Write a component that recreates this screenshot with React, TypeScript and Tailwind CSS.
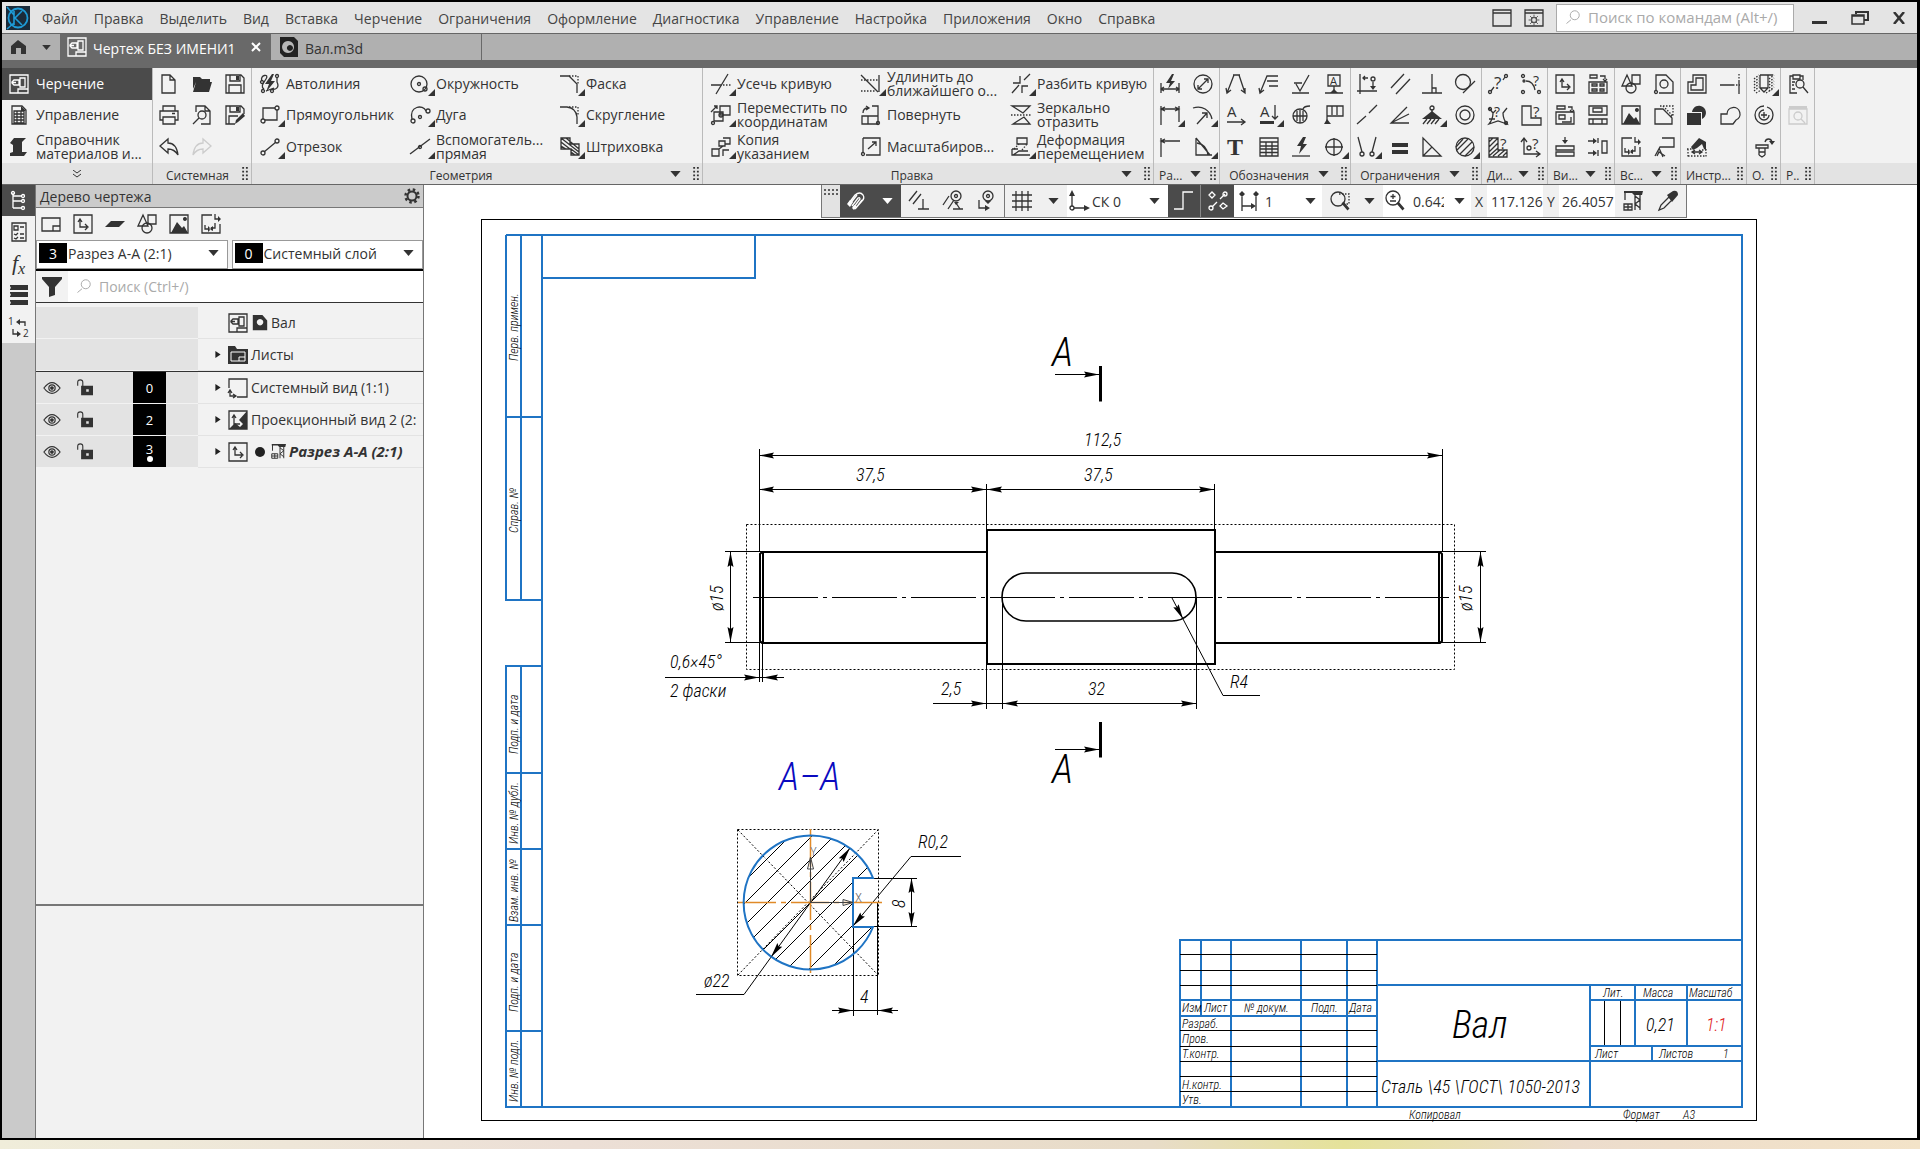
import { clsx } from "clsx";
import type { ReactNode } from "react";

type IconDef = {
  s?: string; // stroked outline
  f?: string; // filled shape
  d?: string; // dotted outline
  c?: number[][]; // circles: cx, cy, r
  t?: [string, number, number, number][]; // characters: text, x, y, size
};

// every icon is drawn in a 20x20 box
const ICONS: Record<string, IconDef> = {
  drawing: { s: "M1 1h18v18H1zM3 8l2-2h5v5H5L3 9zM3 8.500h4M11 4h5v9h-5zM9 19v-4h10" },
  sheetCalc: { s: "M3 1h10l4 4v14H3zM5 9h10M5 12h10M5 15h10M8 6v12M12 6v12M5 6h10v12H5z", f: "M12 1l5 5h-5z" },
  beam: { f: "M5 1h12l-4 4v10h5l-3 4H1v-3l3-1V8L1 6z" },
  newFile: { s: "M3 1h8l5 5v13H3zM11 1v5h5" },
  open: { f: "M1 3h7l2 2h8v3H4L1 15z M4 8h16l-3 10H1z" },
  save: { s: "M1 1h15l3 3v15H1zM5 1v6h10V1M4 19v-8h12v8", f: "M11 2h3v4h-3z" },
  print: { s: "M4 6V1h12v5M4 15H1V6h18v9h-3M4 12h12v7H4zM13 8.500h3" },
  preview: { s: "M4 7V1h9l5 5v13H9M13 1v5h5M7 13l-6 6", c: [[10, 10, 4]] },
  saveAs: { s: "M10 19H1V1h15l3 3v5M5 1v6h10V1M4 19v-8h9", f: "M11 2h3v4h-3zM10 19l1-4 7-7 2 3-7 6z" },
  undo: { s: "M1 9l8-7v4c6 0 9 4 10 12-3-5-6-6-10-6v4z" },
  redo: { s: "M19 9l-8-7v4C5 6 2 10 1 18c3-5 6-6 10-6v4z" },
  autoline: {
    s: "M2 7c-3-6 8-8 4-2S1 13 4 15M17 3v5c3 6-2 8-5 7M6 17l8-3",
    f: "M12 0L5 10h4l-3 8 9-11h-4l3-7z",
    c: [[2, 8, 1.5], [3, 17, 1.5], [17, 2, 1.5], [12, 17, 1.5]],
  },
  rect: { s: "M5 3h10M17 5v10H5M3 14V3h2", c: [[17, 3, 2], [3, 16, 2]] },
  segment: { s: "M4 15L16 5", c: [[3, 16, 2], [17, 4, 2]] },
  circle: { c: [[9, 10, 8], [9, 10, 1.5], [15, 15, 2]] },
  arc: { s: "M2 14C-1 1 13-1 16 6", c: [[3, 16, 2], [18, 6, 2], [10, 12, 1.5]] },
  auxLine: { s: "M0 17L20 2", c: [[10, 10, 1.5]] },
  chamfer: { s: "M0 2h9l8 8v9", d: "M9 2h9v8" },
  fillet: { s: "M0 2h7q9 1 10 10v7", d: "M9 2h9v8" },
  hatch: { s: "M1 1h9v6h9v11h-8v-6H1zM1 5l9 7M1 1l18 14M6 1l13 11M11 12l8 6M1 9l5 3M11 15l4 3" },
  trim: { s: "M0 11h9M5 20L17 0", d: "M9 11h11" },
  extend: { s: "M0 1l17 17M18 1v17", d: "M0 6h17M0 17h14" },
  split: { s: "M1 19l7-8M13 6l6-6M11 19v-7h6M2 9h7V2" },
  moveXY: { s: "M3 7h9v9H3zM9 1h10v9H9zM0 7l6-6M3 1h3v3", c: [[10, 10, 2], [2, 18, 1.5]] },
  rotate: { s: "M1 11h16v8H1zM11 1h6v18M7 11v8M2 8c0-4 2-5 5-5M5 1l3 2-3 2", c: [[17, 18, 1.5]] },
  mirror: { s: "M1 1h18L12 8zM2 19h17L13 12z", d: "M0 10h20" },
  copy: { s: "M8 4h6v5H8zM12 1h7v6h-5M1 12h7v7H1zM12 19v-6h6M8 12l4-3" },
  scale: { s: "M2 1h17v17H5M2 16V1M7 12l8-7M11 5h4v4", c: [[2, 17, 1.5]] },
  deform: { s: "M6 1h10v6H6zM1 12h6M1 12v6h18M2 18l6-4h9", d: "M3 12l5-5M11 13l5-6" },
  autoDim: { s: "M1 9v10M19 9v10M1 15h18M4 13l-3 2 3 2M16 13l3 2-3 2", f: "M12 0L6 9h4l-2 6 7-8h-4l3-7z" },
  linDim: { s: "M1 1v19M19 1v16M1 4h18M5 2L1 4l4 2M15 2l4 2-4 2" },
  ordDim: { s: "M1 1v19M1 4h19M5 2L1 4l4 2" },
  diaDim: { s: "M5 15L15 5M11 5h4v4M5 11v4h4", c: [[10, 10, 9]] },
  radDim: { s: "M0 3c9-3 17 2 19 11M4 19L14 8M14 13V8H9" },
  angDim: { s: "M3 1v17h16M3 1l14 17M4 6c7 1 10 5 11 12" },
  leader: { s: "M7 1h7M8 1L1 19M13 1l6 18M0 14l1 5 4-3M15 16l4 3v-5" },
  posLeader: { s: "M1 19L8 2h11M10 12h9M8 7h11M0 14l1 5 4-3" },
  rough: { s: "M1 19h17M3 9h8M5 10l4 7 9-16" },
  datum: { s: "M4 1h12v11H4zM10 12v6M1 19h18", f: "M6 19l4-4 4 4z", t: [["A", 6, 11, 11]] },
  textArrow: { s: "M1 17h18M15 14l4 3-4 3", t: [["A", 1, 12, 15]] },
  textDown: { s: "M16 0v14M13 11l3 3 3-3", f: "M1 16h14v3H1z", t: [["A", 1, 12, 15]] },
  weld: { s: "M9 5V18M6 6v10M12 6v10M12 4c1-3 4-3 7-3M2 11h14", c: [[9, 11, 7]] },
  flag: { s: "M3 19V1h16v10H3M8 1v9M13 1v9", f: "M0 19h7l-4-5z" },
  bigText: { t: [["T", 1, 18, 24]] },
  table: { s: "M1 1h18v18H1zM1 5h18M1 9h18M1 12h18M1 15.500h18M7 5v14M13 5v14" },
  flash: { s: "M1 19h18", f: "M12 0L6 9h4l-2 8 8-10h-4l3-7z" },
  center: { s: "M10 1v18M1 10h18", c: [[10, 10, 8]] },
  fixPoint: { s: "M3 0v20M0 17h20M6 4h5M8 2L6 4l2 2M16 8v6", f: "M13 12h6l-3 4z", c: [[16, 5, 2]] },
  parallel: { s: "M1 14L14 0M6 20L20 5" },
  perp: { s: "M0 19h20M10 0v19M10 14h4v5" },
  tangent: { s: "M8 19L20 7", c: [[8, 8, 7.5]] },
  collinear: { s: "M0 19l9-8M12 8l8-8" },
  angleCon: { s: "M19 18H1L17 2M1 18l18-9" },
  anchor: { s: "M1 19l4-5M5 19l4-5M9 19l4-5M13 19l4-5M10 4v6", f: "M10 6l10 8H0z", c: [[10, 3, 2]] },
  concentric: { c: [[10, 10, 9], [10, 10, 5]] },
  merge: { s: "M1 0l4 15M19 0l-4 15", c: [[5, 17, 2], [15, 17, 2]] },
  equal: { f: "M2 6h16v4H2zM2 13h16v4H2z" },
  triangle: { s: "M1 1v18h18zM1 19L10 10" },
  hatchCon: { s: "M2 13L13 2M5 17L17 5M1 10l7-8M10 19l9-9", c: [[10, 10, 9]] },
  infoPt: { s: "M3 17l3-4M15 6l2-3", c: [[2, 18, 1.5], [18, 2, 1.5]], t: [["?", 6, 15, 17]] },
  infoArc: { s: "M5 7c5 0 8 4 9 9", c: [[2, 2, 1.5], [2, 18, 1.5], [18, 18, 1.5], [3, 7, 1]], t: [["?", 12, 12, 14]] },
  infoCurve: { s: "M1 3l4 5q0 6-4 11l9-3 9 3q-4-5-4-11l4-5M1 14h6M5 8l3-3", c: [[2, 4, 1.5], [18, 18, 1.5]], t: [["?", 6, 12, 14]] },
  infoL: { s: "M1 1h9v12h10v7H1z", t: [["?", 12, 12, 15]] },
  infoHatch: { s: "M1 1h9v12h9v7H1zM1 5l4-4M1 10l9-9M1 15l9-9M1 19l9-8M5 19l7-6M10 19l7-6M15 19l4-4", t: [["?", 12, 12, 15]] },
  infoAxis: { s: "M3 2v15h15M0 5l3-4 3 4M15 14l4 3-4 3", c: [[8, 11, 2]], t: [["?", 11, 12, 15]] },
  view: { s: "M1 1h18v18H1zM7 6v7h7M5 8l2-3 2 3M12 10l3 3-3 3" },
  viewStd: { s: "M1 8h18v11H1zM2 1h7v3H2zM12 2h5v3M15 5l2 2 2-2M4 10h5v2H4zM12 10h4v2h-4zM4 15h5v2H4zM12 15h4v2h-4z" },
  viewProj: { s: "M1 7h18v12H1zM2 1h8v3H2zM13 2h4v3M15 5l2 2 2-2M4 10h6v4H4zM7 17h9v-5" },
  viewSplit: { s: "M1 1h18v9H1zM5 3h9v4H5zM1 14h18v5H1zM5 14v5M14 14v5" },
  layers: { s: "M1 9h18v4H1zM1 15h18v4H1zM10 0v4", f: "M7 3h6l-3 4z" },
  alignV: { s: "M14 4h5v12h-5zM10 1v5M10 13v6M0 4h5M0 16h5", f: "M5 1l4 3-4 3zM5 13l4 3-4 3z" },
  shapes: { s: "M1 12L6 1l5 11zM11 1h8v9h-8z", c: [[10, 14, 5]] },
  detail: { s: "M2 16V1h10l7 7v11H5", c: [[10, 10, 4], [2, 18, 1.5]] },
  image: { s: "M1 1h18v18H1z", f: "M2 19l6-11 5 6 2-2 4 7zM16 3a2 2 0 1 1-.1 0z" },
  fragment: { s: "M1 4h8l9 9v6H1z", d: "M6 1h13v10h-4M9 1l10 10" },
  insertView: { s: "M11 1H1v18h18v-9M14 0v5h5M4 11v4h4M14 9v5h-4", f: "M17 2l3 3-3 3zM7 12l3 3-3 3zM12 12l-4 3 4 2z" },
  leaderBox: { s: "M8 1h12v9H6L1 19M5 11l4 9M3 19h0l2-4 6 4" },
  contour: { s: "M6 1h13v18H1V8h5zM9 4h7v12H4v-5h5z" },
  extLine: { s: "M0 11h13M19 6v14", d: "M19 0v6M13 11h7" },
  union: { f: "M0 8h14v12H0zM5 7a7 7 0 1 1 10 7V7z" },
  blob: { s: "M1 9h6a6.500 6.500 0 1 1 9 6l-3 4H1z" },
  ruler: { f: "M4 10l8-9 7 4v8l-2-1-2-5-5 4-4 2z", s: "M6 15h8M8 13l-3 2 3 2M12 13l3 2-3 2", d: "M1 12v8M19 12v8M0 12h5M1 19h18M15 13h4" },
  hole: {
    s: "M6 1v13l4 4 4-4V1M6 14h8M10 1h9M6 1h8",
    d: "M0 5l5-4M0 8l5-4M0 11l5-4M0 14l5-4M0 17l5-4M2 19l5-3M15 5l5-4M15 8l5-4M15 11l5-4M15 14l5-4M15 17l5-4M12 19l7-4",
  },
  thread: { s: "M10 7v6M7 10h6M10 1a9 9 0 1 0 9 9q0-6-6-8M10 5a5 5 0 1 0 5 5" },
  bolt: { s: "M2 8h12v3H2zM5 11v7M11 11v7M5 15h6M5 18l3 2 3-2M11 5c1-4 6-4 7 0", f: "M15 4h6l-3 4z" },
  report: { s: "M9 19H2V2h3M12 2h3v4M5 1h7v4H5zM4 8h3M4 11h2M4 15h3M15 13l5 6", c: [[12, 10, 4]] },
  reportOff: { s: "M1 4h18v15H1zM13 14l4 4", f: "M1 1h18v3H1z", c: [[10, 11, 4]] },
  // side strip and tree
  tree: { s: "M4 2v15M4 10h9M4 17h9M4 5h9", c: [[4, 2, 1.5], [14, 5, 1.5], [14, 10, 1.5], [14, 17, 1.5]] },
  checklist: { s: "M3 1h14v18H3zM5 4h4v4H5zM11 5h4M5 12l2 1 2-2M11 12h4M5 16l2 1 2-2M11 16h4" },
  stack: { f: "M1 0h18v5H1V4l1-1-1-2zM1 7h18v5H1v-1l1-1-1-2zM1 15h18v5H1v-1l1-1-1-2z" },
  swap: { s: "M10 5h6v4M4 12v5h5", f: "M11 2L7 5l4 3zM8 14l4 3-4 3z", t: [["1", -1, 8, 10], ["2", 14, 20, 10]] },
  sheet: { s: "M1 4h18v13H1zM12 17v-5h7" },
  plane: { f: "M6 7h14l-6 6H0z" },
  funnel: { f: "M0 0h20v2l-7 8v8l-6 2V10L0 2z" },
  sysView: { s: "M1 10V1h18v18H9M2 13v5h5M0 15l2-3 2 3M5 16l3 2-3 2" },
  projView: { s: "M1 1h18v18H1zM6 5v9h6M4 8l2-3 2 3", f: "M19 1v18H1l6-6 5 4 3-3-4-4z" },
  eye: { s: "M1 10q9-12 18 0-9 12-18 0z", c: [[10, 10, 3.5]], f: "M10 8a2 2 0 1 1-.1 0z" },
  lock: { f: "M6 8h14v11H6zM12 12v3h3v-3z", s: "M2 8V4q0-3 3-3t3 3v5" },
  crane: { s: "M2 1v8M12 4v15M17 4v15M12 5l5 4-5 4 5 4M1 13h8v6H1zM5 13v6M1 16h8", f: "M1 0h19l-1 4h-8l-2-2H1z" },
  part: { f: "M1 0h12l6 7v12H1zM10 5a4 4 0 1 0 .1 0z" },
  gear: { s: "M10 1v3M10 16v3M1 10h3M16 10h3M3.500 3.500l3 3M13.500 13.500l3 3M16.500 3.500l-3 3M6.500 13.500l-3 3", c: [[10, 10, 5], [10, 10, 4]] },
  search: { s: "M8 13l-6 5", c: [[13, 7, 6]] },
  window: { s: "M1 2h18v16H1zM1 5h18" },
  // floating toolbar
  magnet: { s: "M3 12L9 4q5-4 8 0 2 3-1 6l-7 8M6 15l6-8q2-1 2 1l-6 8M4 13l7-9M10 17l6-8", f: "M1 13l3-4 3 2-3 5zM6 17l2-3 3 1-3 4z" },
  snapPerp: { s: "M0 10L8 0M4 13l8-10M9 18h11M14 8v10" },
  snapPar: { s: "M0 14l6-9M5 18l6-9M10 18h10M13 12l4 6", f: "M11 11h5l-3 3z", c: [[13, 5, 5], [13, 5, 1.5]] },
  snapAxis: { s: "M3 9v8h7", f: "M9 14l5 3-5 3zM9 10h6l-3 3z", c: [[12, 5, 5], [12, 5, 1.5]] },
  grid: { s: "M4 0v20M10 0v20M16 0v20M0 4h20M0 10h20M0 16h20" },
  axes: { s: "M3 3v12M5 17h12", f: "M0 5l3-6 3 6zM15 14l6 3-6 3z", c: [[3, 17, 2]] },
  ortho: { s: "M0 18h9V1h10" },
  snapNodes: { s: "M4 16l5-5M12 8l5-5M4 1l3 3-3 3-3-3zM15 12l4 3-4 3-3-3z", c: [[3, 17, 2], [17, 3, 2]] },
  step: { s: "M3 6v14M17 6v14M3 15h12", f: "M12 12l5 3-5 3zM3 0l3 3-3 3-3-3zM17 0l3 3-3 3-3-3z" },
  zoomArea: { s: "M12 12l6 7M13 11l6 7", c: [[8, 8, 7]], d: "M9 3h10v10h-7" },
  zoomIn: { s: "M12 12l6 7M13 11l6 7M8 3v5M5.500 5.500h5M5 10h6", c: [[8, 7, 7]] },
  dropper: { s: "M1 19l2-5 8-8 3 3-8 8z", f: "M9 4l6-4q5-1 5 4l-6 7z" },
};

function Icon({ name, more, className }: { name: string; more?: boolean; className?: string }) {
  const icon = ICONS[name];
  return (
    <svg
      viewBox="0 0 20 20"
      className={clsx("shrink-0 overflow-visible", className ?? "size-5")}
      fill="none"
      stroke="currentColor"
      strokeWidth="1.3"
      aria-hidden="true"
    >
      {icon.f && <path d={icon.f} fill="currentColor" fillRule="evenodd" stroke="none" />}
      {icon.s && <path d={icon.s} />}
      {icon.d && <path d={icon.d} strokeDasharray="1.5 1.5" />}
      {icon.c?.map(([cx, cy, r]) => (
        <circle key={`${cx}-${cy}-${r}`} cx={cx} cy={cy} r={r} />
      ))}
      {icon.t?.map(([char, x, y, size]) => (
        <text
          key={char}
          x={x}
          y={y}
          fontSize={size}
          fill="currentColor"
          stroke="none"
          fontFamily={char === "T" ? "Liberation Serif, serif" : "Open Sans, sans-serif"}
          fontWeight={char === "T" ? 700 : 500}
        >
          {char}
        </text>
      ))}
      {more && <path d="M25 15v7h-7z" fill="currentColor" stroke="none" />}
    </svg>
  );
}

function Caret({ className }: { className?: string }) {
  return (
    <svg viewBox="0 0 12 7" className={clsx("shrink-0", className ?? "h-[6px] w-[11px]")} aria-hidden="true">
      <path d="M0 0h12L6 7z" fill="currentColor" />
    </svg>
  );
}

function Grip() {
  return (
    <svg viewBox="0 0 6 14" className="h-[13px] w-[6px] shrink-0" aria-hidden="true">
      <path d="M0 1h2m2 0h2M0 5h2m2 0h2M0 9h2m2 0h2M0 13h2m2 0h2" stroke="#333" strokeWidth="2" />
    </svg>
  );
}

const MENU = [
  "Файл",
  "Правка",
  "Выделить",
  "Вид",
  "Вставка",
  "Черчение",
  "Ограничения",
  "Оформление",
  "Диагностика",
  "Управление",
  "Настройка",
  "Приложения",
  "Окно",
  "Справка",
];

// [icon, label, has sub-menu], listed row by row
type Tool = [string, string, boolean?];

const GEOMETRY: Tool[] = [
  ["autoline", "Автолиния"],
  ["circle", "Окружность", true],
  ["chamfer", "Фаска", true],
  ["rect", "Прямоугольник", true],
  ["arc", "Дуга", true],
  ["fillet", "Скругление", true],
  ["segment", "Отрезок", true],
  ["auxLine", "Вспомогатель...\nпрямая", true],
  ["hatch", "Штриховка", true],
];

const EDITING: Tool[] = [
  ["trim", "Усечь кривую", true],
  ["extend", "Удлинить до\nближайшего о...", true],
  ["split", "Разбить кривую", true],
  ["moveXY", "Переместить по\nкоординатам", true],
  ["rotate", "Повернуть"],
  ["mirror", "Зеркально\nотразить"],
  ["copy", "Копия\nуказанием", true],
  ["scale", "Масштабиров..."],
  ["deform", "Деформация\nперемещением", true],
];

// a trailing "+" marks a tool with a sub-menu, an empty string leaves the cell blank
const ICON_GROUPS = [
  {
    title: "Ра...",
    menu: true,
    className: "w-[66px]",
    grid: "grid-cols-2",
    icons: ["autoDim", "diaDim", "linDim+", "radDim+", "ordDim", "angDim+"],
  },
  {
    title: "Обозначения",
    menu: true,
    className: "w-[131px]",
    grid: "grid-cols-4",
    icons: [
      "leader", "posLeader", "rough", "datum",
      "textArrow", "textDown+", "weld", "flag",
      "bigText", "table", "flash", "center+",
    ],
  },
  {
    title: "Ограничения",
    menu: true,
    className: "w-[131px]",
    grid: "grid-cols-4",
    icons: [
      "fixPoint", "parallel", "perp", "tangent",
      "collinear", "angleCon", "anchor+", "concentric",
      "merge+", "equal", "triangle", "hatchCon+",
    ],
  },
  {
    title: "Ди...",
    menu: true,
    className: "w-[66px]",
    grid: "grid-cols-2",
    icons: ["infoPt", "infoArc", "infoCurve", "infoL", "infoHatch", "infoAxis"],
  },
  {
    title: "Ви...",
    menu: true,
    className: "w-[67px]",
    grid: "grid-cols-2",
    icons: ["view", "viewStd", "viewProj", "viewSplit", "layers", "alignV"],
  },
  {
    title: "Вс...",
    menu: true,
    className: "w-[66px]",
    grid: "grid-cols-2",
    icons: ["shapes", "detail", "image", "fragment", "insertView", "leaderBox"],
  },
  {
    title: "Инстр...",
    menu: false,
    className: "w-[66px]",
    grid: "grid-cols-2",
    icons: ["contour", "extLine", "union", "blob", "ruler", ""],
  },
  {
    title: "О.",
    menu: false,
    className: "w-[34px]",
    grid: "grid-cols-1",
    icons: ["hole+", "thread", "bolt"],
  },
  {
    title: "Р..",
    menu: false,
    className: "w-[34px]",
    grid: "grid-cols-1",
    icons: ["report", "reportOff", ""],
  },
];

function MenuBar() {
  return (
    <header className="flex h-8 items-center border-b border-[#666] bg-[#e4e4e4] pl-1">
      <svg viewBox="0 0 24 24" className="size-6" aria-label="КОМПАС">
        <rect width="24" height="24" fill="#1b2b3a" />
        <circle cx="12" cy="12" r="9.500" fill="none" stroke="#1e9bd7" strokeWidth="1.800" />
        <path d="M8 5v14M16 5l-7 7 7 7M1 1l7 8M1 23l7-6" fill="none" stroke="#1e9bd7" strokeWidth="1.600" />
      </svg>
      <nav className="ml-1 flex text-[14px] text-[#444]">
        {MENU.map((item) => (
          <button key={item} className="px-2 pt-[2px] whitespace-nowrap">
            {item}
          </button>
        ))}
      </nav>
      <div className="ml-auto flex items-center text-[#333]">
        <button aria-label="Область окна" className="mr-3 flex">
          <Icon name="window" />
        </button>
        <button aria-label="Настройка интерфейса" className="mr-3 grid">
          <Icon name="window" className="col-start-1 row-start-1 size-5" />
          <Icon name="gear" className="col-start-1 row-start-1 m-auto mt-[6px] size-3" />
        </button>
        <label className="mr-[18px] flex h-7 w-[238px] items-center gap-2 border border-[#aaa] bg-white px-2 text-[#aaa]">
          <Icon name="search" className="size-[15px]" />
          <input
            type="text"
            aria-label="Поиск по командам"
            placeholder="Поиск по командам (Alt+/)"
            className="w-full min-w-0 text-[15px] outline-none placeholder:text-[#aaa]"
          />
        </label>
        <button aria-label="Свернуть" className="mr-6 flex h-3 w-[15px] items-end">
          <span className="h-[3px] w-full bg-[#333]" />
        </button>
        <button aria-label="Восстановить" className="mr-6 flex">
          <svg viewBox="0 0 18 14" className="h-[14px] w-[18px]" fill="none" stroke="#333">
            <path d="M5 3V1h12v8h-4" strokeWidth="2" />
            <path d="M1 4h12v9H1zM1 5h12" strokeWidth="1.500" />
          </svg>
        </button>
        <button aria-label="Закрыть" className="mr-3 flex">
          <svg viewBox="0 0 12 12" className="size-3" stroke="#333" strokeWidth="2.500">
            <path d="M1 0l10 12M11 0L1 12" />
          </svg>
        </button>
      </div>
    </header>
  );
}

function TabBar() {
  return (
    <div className="flex h-[34px] items-stretch border-b-8 border-[#696969] bg-[#b0b0b0] text-[14px] text-[#333]">
      <button aria-label="Стартовая страница" className="flex w-[58px] items-center gap-4 pl-2">
        <svg viewBox="0 0 16 14" className="h-[14px] w-4" aria-hidden="true">
          <path d="M8 0l8 6v8h-5V8H6v6H1V6z" fill="#333" />
        </svg>
        <Caret className="h-[5px] w-[9px]" />
      </button>
      <div className="flex w-[211px] items-center bg-[#696969] pl-[7px] text-white">
        <Icon name="drawing" />
        <button className="pt-[3px] pl-[6px] whitespace-nowrap">Чертеж БЕЗ ИМЕНИ1</button>
        <button aria-label="Закрыть вкладку" className="mr-[10px] ml-auto">
          <svg viewBox="0 0 10 10" className="size-[10px]" stroke="currentColor" strokeWidth="2">
            <path d="M1 1l8 8M9 1L1 9" />
          </svg>
        </button>
      </div>
      <button className="flex w-[211px] items-center gap-[6px] border-r border-[#696969] pl-2">
        <svg viewBox="0 0 20 20" className="size-5" aria-hidden="true">
          <path d="M1 0h14l4 4v16H5l-4-4z" fill="#222" />
          <path d="M9 4a6 6 0 1 0 .1 0zM11 8a3 3 0 1 1-.1 0z" fill="#b8b8b8" fillRule="evenodd" />
        </svg>
        <span className="pt-[3px]">Вал.m3d</span>
      </button>
    </div>
  );
}

function GroupFooter({ title, menu, wide }: { title: string; menu?: boolean; wide?: boolean }) {
  return (
    <div className="flex h-[21px] items-center bg-[#e3e3e3] pr-[3px] text-[12px] text-[#333]">
      <span className={clsx("flex-1 pt-1 whitespace-nowrap", wide ? "text-center" : "pl-[5px]")}>{title}</span>
      {menu && <Caret className={clsx("h-[6px] w-[11px]", wide ? "mr-3" : "mr-[9px]")} />}
      <Grip />
    </div>
  );
}

function LabelledGroup({ title, tools }: { title: string; tools: Tool[] }) {
  return (
    <section className="flex w-[451px] shrink-0 flex-col border-r border-[#bbb]">
      <div className="grid flex-1 grid-cols-3 grid-rows-3">
        {tools.map(([icon, label, more]) => (
          <button key={label} className="flex min-w-0 items-center gap-[6px] pl-2 text-left">
            <Icon name={icon} more={more} />
            <span className="text-[14px] leading-[14px] whitespace-pre">{label}</span>
          </button>
        ))}
      </div>
      <GroupFooter title={title} menu wide />
    </section>
  );
}

function IconCell({ spec, disabled }: { spec: string; disabled?: boolean }) {
  const name = spec.replace("+", "");
  if (!name) return <span />;
  return (
    <button
      aria-label={name}
      disabled={disabled}
      className={clsx("flex items-center justify-center", disabled && "text-[#ccc]")}
    >
      <Icon name={name} more={spec.endsWith("+")} />
    </button>
  );
}

function Ribbon() {
  return (
    <div className="flex h-[117px] overflow-hidden border-b border-[#666] bg-[#f2f2f2] text-[#333]">
      <section className="flex w-[151px] shrink-0 flex-col border-r border-[#bbb] text-[14px] leading-[14px]">
        <div className="grid flex-1 grid-rows-3">
          <button className="flex items-center gap-[7px] bg-[#4b4b4b] pl-[7px] text-left text-white">
            <Icon name="drawing" />
            Черчение
          </button>
          <button className="flex items-center gap-[7px] pl-[7px] text-left">
            <Icon name="sheetCalc" />
            Управление
          </button>
          <button className="flex items-center gap-[7px] pl-[7px] text-left">
            <Icon name="beam" />
            <span className="whitespace-pre">{"Справочник\nматериалов и..."}</span>
          </button>
        </div>
        <button aria-label="Ещё" className="flex h-[21px] items-center justify-center bg-[#e3e3e3]">
          <svg viewBox="0 0 8 8" className="size-2" fill="none" stroke="#333">
            <path d="M0 0l4 3 4-3M0 4l4 3 4-3" />
          </svg>
        </button>
      </section>

      <section className="flex w-[99px] shrink-0 flex-col border-r border-[#bbb]">
        <div className="grid flex-1 grid-cols-3 grid-rows-3">
          {["newFile", "open", "save", "print", "preview", "saveAs", "undo", "redo"].map((name) => (
            <IconCell key={name} spec={name} disabled={name === "redo"} />
          ))}
        </div>
        <GroupFooter title="Системная" wide />
      </section>

      <LabelledGroup title="Геометрия" tools={GEOMETRY} />
      <LabelledGroup title="Правка" tools={EDITING} />

      {ICON_GROUPS.map((group) => (
        <section key={group.title} className={clsx("flex shrink-0 flex-col border-r border-[#bbb]", group.className)}>
          <div className={clsx("grid flex-1 grid-rows-3", group.grid)}>
            {group.icons.map((spec, index) => (
              <IconCell key={index} spec={spec} disabled={spec === "reportOff"} />
            ))}
          </div>
          <GroupFooter title={group.title} menu={group.menu} wide={group.icons.length > 6} />
        </section>
      ))}
      <div className="flex flex-1 flex-col justify-end">
        <div className="h-[21px] bg-[#e3e3e3]" />
      </div>
    </div>
  );
}

function SideStrip() {
  return (
    <div className="w-[33px] shrink-0 bg-[#cacaca] text-[#333]">
      <button aria-label="Дерево" className="flex h-[31px] w-full items-center justify-center bg-[#4b4b4b] text-white">
        <Icon name="tree" />
      </button>
      <button aria-label="Параметры" className="flex h-[31px] w-full items-center justify-center bg-[#f2f2f2]">
        <Icon name="checklist" />
      </button>
      <button className="h-8 w-full bg-[#f2f2f2] font-[Liberation_Serif,serif] text-[22px] leading-6 italic">
        f<sub className="text-[16px]">x</sub>
      </button>
      <button aria-label="Слои" className="flex h-8 w-full items-center justify-center bg-[#f2f2f2]">
        <Icon name="stack" />
      </button>
      <button aria-label="Замена" className="flex h-8 w-full items-center justify-center bg-[#f2f2f2]">
        <Icon name="swap" />
      </button>
    </div>
  );
}

function LayerSelect({ badge, value, label }: { badge: string; value: string; label: string }) {
  return (
    <label className="flex h-[29px] min-w-0 flex-1 items-center border border-[#999] bg-white pr-2 pb-[3px] pl-[2px]">
      <span className="flex h-5 w-7 shrink-0 items-center justify-center bg-black text-white">{badge}</span>
      <select aria-label={label} className="min-w-0 flex-1 appearance-none pl-[1px] whitespace-nowrap outline-none">
        <option>{value}</option>
      </select>
      <Caret />
    </label>
  );
}

type RowProps = { layer?: string; current?: boolean; expandable?: boolean; children: ReactNode };

function TreeRow({ layer, current, expandable, children }: RowProps) {
  return (
    <li className="flex h-8">
      <div className="flex w-[162px] shrink-0 items-stretch border-b border-[#f2f2f2] bg-[#e3e3e3]">
        {layer && (
          <>
            <button aria-label="Видимость" className="ml-[7px] flex items-center">
              <Icon name="eye" className="size-[18px]" />
            </button>
            <button aria-label="Блокировка" className="ml-[15px] flex items-center">
              <Icon name="lock" className="size-[17px]" />
            </button>
            <span className="ml-10 flex w-[33px] flex-col items-center justify-center bg-black text-[13px] leading-[14px] text-white">
              {layer}
              {current && <span className="size-[6px] rounded-full bg-white" />}
            </span>
          </>
        )}
      </div>
      <div className="flex min-w-0 flex-1 items-center gap-[3px] overflow-hidden border-b border-[#e3e3e3] pl-[17px] whitespace-nowrap">
        <span className="w-[10px] shrink-0">
          {expandable && (
            <svg viewBox="0 0 6 8" className="h-[7px] w-[6px]" aria-hidden="true">
              <path d="M0 0l6 4-6 4z" fill="#222" />
            </svg>
          )}
        </span>
        {children}
      </div>
    </li>
  );
}

function TreePanel() {
  return (
    <aside className="flex w-[389px] shrink-0 flex-col border-x border-[#777] bg-[#f2f2f2] text-[15px] text-[#333]">
      <div className="flex h-[23px] items-center justify-between border-b border-[#777] bg-[#cbcbcb] pr-[3px] pl-1 text-[14px]">
        Дерево чертежа
        <button aria-label="Настройка дерева" className="flex">
          <svg viewBox="0 0 16 16" className="size-4" fill="none" stroke="#333">
            <circle cx="8" cy="8" r="4.500" strokeWidth="2" />
            <circle cx="8" cy="8" r="6.500" strokeWidth="2.500" strokeDasharray="2.500 2.600" />
          </svg>
        </button>
      </div>
      <div className="flex h-8 items-center gap-3 pl-[5px]">
        {["sheet", "view", "plane", "shapes", "image", "insertView"].map((name) => (
          <button key={name} aria-label={name} className="flex">
            <Icon name={name} />
          </button>
        ))}
      </div>
      <div className="flex gap-1 border-b-2 border-black text-[14px]">
        <LayerSelect badge="3" value="Разрез А-А (2:1)" label="Текущий вид" />
        <LayerSelect badge="0" value="Системный слой" label="Текущий слой" />
      </div>
      <div className="flex h-8 items-stretch border-b border-[#333]">
        <button aria-label="Фильтр" className="flex w-8 items-center justify-center">
          <Icon name="funnel" />
        </button>
        <label className="flex flex-1 items-center gap-2 bg-white pl-2 text-[#aaa]">
          <Icon name="search" className="size-[15px]" />
          <input
            type="text"
            aria-label="Поиск"
            placeholder="Поиск (Ctrl+/)"
            className="w-full text-[14px] outline-none placeholder:text-[#aaa]"
          />
        </label>
      </div>
      <ul className="pt-1 text-[14px]">
        <TreeRow>
          <Icon name="drawing" />
          <Icon name="part" className="ml-[1px] size-4" />
          Вал
        </TreeRow>
        <TreeRow expandable>
          <svg viewBox="0 0 20 20" className="size-5 shrink-0" aria-hidden="true">
            <path d="M0 1h7l2 3h11v15H0z" fill="#333" />
            <path d="M3 7h14v9H3zM11 16v-4h6" fill="none" stroke="#fff" />
          </svg>
          Листы
        </TreeRow>
        <li className="h-px bg-[#333]" />
        <TreeRow layer="0" expandable>
          <Icon name="sysView" />
          Системный вид (1:1)
        </TreeRow>
        <TreeRow layer="2" expandable>
          <Icon name="projView" />
          Проекционный вид 2 (2:
        </TreeRow>
        <TreeRow layer="3" current expandable>
          <Icon name="view" />
          <span className="mr-[3px] ml-1 size-[10px] shrink-0 rounded-full bg-[#222]" />
          <Icon name="crane" className="size-[15px]" />
          <span className="text-[15px] font-bold italic">Разрез А-А (2:1)</span>
        </TreeRow>
      </ul>
      <div className="flex-1" />
      <div className="h-[234px] border-t-2 border-[#777]" />
    </aside>
  );
}

function CanvasToolbar() {
  return (
    <div className="mr-[230px] flex h-[33px] shrink-0 items-stretch self-end border border-t-0 border-[#777] bg-[#f0f0f0] text-[14px] text-[#333]">
      <span className="flex w-[18px] justify-center bg-[#e3e3e3] pt-1">
        <svg viewBox="0 0 14 6" className="h-[6px] w-[14px]" aria-hidden="true">
          <path d="M0 1h14M0 5h14" stroke="#333" strokeWidth="1.500" strokeDasharray="2 2" />
        </svg>
      </span>
      <button aria-label="Привязки" className="flex w-[61px] items-center gap-4 bg-[#4b4b4b] pl-[6px] text-white">
        <Icon name="magnet" />
        <Caret />
      </button>
      <div className="flex w-[104px] items-center justify-between border-r border-[#777] px-2">
        {["snapPerp", "snapPar", "snapAxis"].map((name) => (
          <button key={name} aria-label={name} className="flex">
            <Icon name={name} />
          </button>
        ))}
      </div>
      <button aria-label="Сетка" className="flex w-[62px] items-center justify-between pr-2 pl-[7px]">
        <Icon name="grid" />
        <Caret />
      </button>
      <label className="flex w-[101px] items-center gap-[3px] bg-white pr-2 pl-[2px]">
        <Icon name="axes" />
        <select aria-label="Система координат" className="min-w-0 flex-1 appearance-none outline-none">
          <option>СК 0</option>
        </select>
        <Caret />
      </label>
      <button aria-label="Ортогональное черчение" className="flex w-[33px] items-center justify-center border-r border-[#888] bg-[#4b4b4b] text-white">
        <Icon name="ortho" />
      </button>
      <button aria-label="Параметрический режим" className="flex w-[33px] items-center justify-center bg-[#4b4b4b] text-white">
        <Icon name="snapNodes" />
      </button>
      <label className="flex w-[88px] items-center gap-[6px] bg-white pr-[6px] pl-[5px]">
        <Icon name="step" />
        <select aria-label="Шаг курсора" className="min-w-0 flex-1 appearance-none outline-none">
          <option>1</option>
        </select>
        <Caret />
      </label>
      <button aria-label="Масштаб по рамке" className="flex w-[61px] items-center justify-between pr-2 pl-2">
        <Icon name="zoomArea" />
        <Caret />
      </button>
      <label className="flex w-[88px] items-center gap-2 bg-white pr-[6px] pl-[2px]">
        <Icon name="zoomIn" />
        <input aria-label="Масштаб" defaultValue="0.6424" className="w-[31px] outline-none" />
        <Caret className="ml-auto h-[6px] w-[11px]" />
      </label>
      <label className="flex w-[72px] items-center">
        <span className="w-4 text-center">X</span>
        <input defaultValue="117.126" className="h-full w-14 bg-white pl-1 outline-none" />
      </label>
      <label className="flex w-[72px] items-center">
        <span className="w-4 text-center">Y</span>
        <input defaultValue="26.4057" className="h-full w-14 bg-white pl-[3px] outline-none" />
      </label>
      <div className="flex w-[71px] items-center justify-around">
        <button aria-label="Режим построения" className="flex">
          <Icon name="crane" />
        </button>
        <button aria-label="Копировать свойства" className="flex">
          <Icon name="dropper" />
        </button>
      </div>
    </div>
  );
}

// arrow head with its tip at x,y; angle 0 points right
function Arrow({ x, y, angle = 0 }: { x: number; y: number; angle?: number }) {
  return <path d="M0 0L-15 -3L-13 0L-15 3z" transform={`translate(${x} ${y}) rotate(${angle})`} />;
}

const BLUE = "#1f74c4";
const HATCH_SUMS = [1626, 1648, 1670, 1691, 1713, 1735, 1756, 1778, 1799];

type Label = [string, number, number];

const STAMP_TEXT: Label[] = [
  ["Изм", 1182, 1012],
  ["Лист", 1204, 1012],
  ["№ докум.", 1244, 1012],
  ["Подп.", 1311, 1012],
  ["Дата", 1349, 1012],
  ["Разраб.", 1182, 1028],
  ["Пров.", 1182, 1043],
  ["Т.контр.", 1182, 1058],
  ["Н.контр.", 1182, 1089],
  ["Утв.", 1182, 1104],
  ["Лит.", 1603, 997],
  ["Масса", 1643, 997],
  ["Масштаб", 1689, 997],
  ["Лист", 1595, 1058],
  ["Листов", 1659, 1058],
  ["1", 1723, 1058],
  ["Копировал", 1409, 1119],
  ["Формат", 1623, 1119],
  ["А3", 1683, 1119],
];

const SIDE_TEXT: Label[] = [
  ["Перв. примен.", 518, 361],
  ["Справ. №", 518, 533],
  ["Подп. и дата", 518, 754],
  ["Инв. № дубл.", 518, 844],
  ["Взам. инв. №", 518, 922],
  ["Подп. и дата", 518, 1012],
  ["Инв. № подл.", 518, 1102],
];

const DIM_TEXT: Label[] = [
  ["112,5", 1084, 446],
  ["37,5", 856, 481],
  ["37,5", 1084, 481],
  ["0,6×45°", 670, 668],
  ["2 фаски", 670, 697],
  ["2,5", 941, 695],
  ["32", 1088, 695],
  ["R4", 1230, 688],
  ["R0,2", 918, 848],
  ["ø22", 704, 987],
  ["4", 860, 1003],
];

function SheetFrame() {
  return (
    <g>
      <rect x="481.500" y="219.500" width="1275" height="901" fill="#fff" stroke="#000" />
      <g fill="none" stroke={BLUE} strokeWidth="2">
        <path d="M506 235H1742V1107H506V666H542M506 235V600H542M542 235V1107M521 235V600M521 666V1107" />
        <path d="M542 278H755V235M506 417H542M506 773H542M506 849H542M506 925H542M506 1031H542" />
        <path d="M1180 1107V940H1742M1201 940V1016M1231 940V1107M1301 940V1107M1347 940V1107M1377 940V1107" />
        <path d="M1180 1000H1377M1180 1016H1377M1377 985H1742M1590 985V1107M1590 1000H1742M1590 1046H1742" />
        <path d="M1377 1061H1742M1635 985V1046M1687 985V1046M1652 1046V1061" />
      </g>
      <path
        d="M1180 954.500h197M1180 970.500h197M1180 985.500h197M1180 1030.500h197M1180 1046.500h197M1180 1061.500h197M1180 1076.500h197M1180 1091.500h197M1604.500 1001v44M1620.500 1001v44"
        stroke="#000"
      />
      <g fontSize="12">
        {STAMP_TEXT.map(([text, x, y]) => (
          <text key={`${x}-${y}`} x={x} y={y}>
            {text}
          </text>
        ))}
        {SIDE_TEXT.map(([text, x, y]) => (
          <text key={y} transform={`translate(${x} ${y}) rotate(-90)`}>
            {text}
          </text>
        ))}
      </g>
      <text x="1452" y="1038" fontSize="38">
        Вал
      </text>
      <text x="1381" y="1093" fontSize="18">
        {"Сталь \\45 \\ГОСТ\\ 1050-2013"}
      </text>
      <text x="1646" y="1031" fontSize="18">
        0,21
      </text>
      <text x="1706" y="1031" fontSize="18" fill="#e02020">
        1:1
      </text>
    </g>
  );
}

function ShaftView() {
  return (
    <g>
      <rect x="746.500" y="524.500" width="708" height="145" fill="none" stroke="#000" strokeDasharray="2 2" />
      <g fill="none" stroke="#000" strokeWidth="2">
        <rect x="987" y="530" width="228" height="134" />
        <path d="M987 552H762L760 554V641L762 643H987M763 552V643M1215 552H1440L1442 554V641L1440 643H1215M1439 552V643" />
        <rect x="1002" y="573" width="194" height="48" rx="24" strokeWidth="1.600" />
      </g>
      <g fill="none" stroke="#000">
        <path d="M753 597.500H1449" strokeDasharray="65 5 4 5" />
        <path d="M759.500 449V552M1442.500 449V552M759.500 455.500H1442.500M986.500 484V530M1214.500 484V530M759.500 489.500H1214.500" />
        <path d="M725 551.500H762M725 642.500H762M730.500 552V642M1440 551.500H1486M1440 642.500H1486M1480.500 552V642" />
        <path d="M759.500 643V682M762.500 643V682M665 677.500H784" />
        <path d="M986.500 664V709M1002.500 598V709M1196.500 598V709M933 703.500H1196" />
        <path d="M1172 598L1223 695.500H1260M1055 374.500H1100M1055 749.500H1100" />
        <path d="M1100.500 366V401.500M1100.500 722V757.500" strokeWidth="3" />
      </g>
      <Arrow x={759} y={455.5} angle={180} />
      <Arrow x={1442} y={455.5} />
      <Arrow x={759} y={489.5} angle={180} />
      <Arrow x={986} y={489.5} />
      <Arrow x={987} y={489.5} angle={180} />
      <Arrow x={1214} y={489.5} />
      <Arrow x={730.5} y={552} angle={-90} />
      <Arrow x={730.5} y={642} angle={90} />
      <Arrow x={1480.5} y={552} angle={-90} />
      <Arrow x={1480.5} y={642} angle={90} />
      <Arrow x={759} y={677.5} />
      <Arrow x={763} y={677.5} angle={180} />
      <Arrow x={986} y={703.5} />
      <Arrow x={1003} y={703.5} angle={180} />
      <Arrow x={1196} y={703.5} />
      <Arrow x={1183} y={619} angle={62} />
      <Arrow x={1099} y={374.5} />
      <Arrow x={1099} y={749.5} />
      <g fontSize="40">
        <text x="1052" y="366">
          А
        </text>
        <text x="1052" y="783">
          А
        </text>
      </g>
      <g fontSize="18">
        <text transform="translate(723 611) rotate(-90)">ø15</text>
        <text transform="translate(1472 611) rotate(-90)">ø15</text>
      </g>
    </g>
  );
}

function SectionView() {
  const outline = "M873 878A67 67 0 1 0 873 927H853V878Z";
  return (
    <g>
      <clipPath id="section">
        <path d={outline} />
      </clipPath>
      <g clipPath="url(#section)" stroke="#000">
        {HATCH_SUMS.map((sum) => (
          <path key={sum} d={`M740 ${sum - 740}L885 ${sum - 885}`} />
        ))}
      </g>
      <g fill="none" stroke="#000">
        <path
          d="M737.500 829.500H878.500V975.500H737.500zM738 830L878 975M738 975L878 830"
          strokeDasharray="2 2"
        />
        <path d="M696 994.500H744L850 848M961 856.500H911L853 926" />
        <path d="M873 878.500H917M873 926.500H917M911.500 878V927M853.500 927V1016M877.500 902V1015M832 1010.500H898" />
      </g>
      <g stroke="#e08a28" strokeWidth="1.500">
        <path d="M738 902.500H884" strokeDasharray="38 5 5 5" />
        <path d="M810.500 829V975" strokeDasharray="38 5 5 5" />
      </g>
      <path d={outline} fill="none" stroke={BLUE} strokeWidth="2" />
      <path d="M810.500 903V858M807.500 869l3-12 3 12zM810 902.500H853M843 899.500l10 3-10 3z" fill="none" stroke="#444" />
      <g fontSize="13" fill="#666" fontStyle="normal">
        <text x="810" y="856">
          Y
        </text>
        <text x="855" y="902">
          X
        </text>
      </g>
      <Arrow x={850} y={848} angle={-54} />
      <Arrow x={771} y={957} angle={126} />
      <Arrow x={853} y={926} angle={130} />
      <Arrow x={911.5} y={878} angle={-90} />
      <Arrow x={911.5} y={927} angle={90} />
      <Arrow x={853} y={1010.5} />
      <Arrow x={878} y={1010.5} angle={180} />
      <text transform="translate(905 908) rotate(-90)" fontSize="18">
        8
      </text>
      <text x="779" y="790" fontSize="38" fill="#0a0ac0">
        А–А
      </text>
    </g>
  );
}

function DrawingSheet() {
  return (
    <svg
      viewBox="424 218 1493 920"
      className="block min-h-0 w-full flex-1 font-[Roboto_Condensed,Roboto,sans-serif] font-light"
      fontStyle="italic"
      aria-label="Чертеж вала"
    >
      <SheetFrame />
      <ShaftView />
      <SectionView />
      <g fontSize="18">
        {DIM_TEXT.map(([text, x, y]) => (
          <text key={`${x}-${y}`} x={x} y={y}>
            {text}
          </text>
        ))}
      </g>
    </svg>
  );
}

export default function App() {
  return (
    <div className="flex h-screen flex-col bg-black font-[Open_Sans,Noto_Sans,sans-serif]">
      <div className="flex min-h-0 flex-1 flex-col border-t-2 border-r-3 border-b-2 border-l-2 border-black bg-white">
        <MenuBar />
        <TabBar />
        <Ribbon />
        <main className="flex min-h-0 flex-1">
          <SideStrip />
          <TreePanel />
          <div className="flex min-w-0 flex-1 flex-col bg-white">
            <CanvasToolbar />
            <DrawingSheet />
          </div>
        </main>
      </div>
      <div className="h-[9px] shrink-0 bg-[linear-gradient(90deg,#f0edda,#ecdfd6_30%,#e8dcc8_60%,#e5e29a_70%,#ecdccc_82%,#f3e3c8)]" />
    </div>
  );
}
